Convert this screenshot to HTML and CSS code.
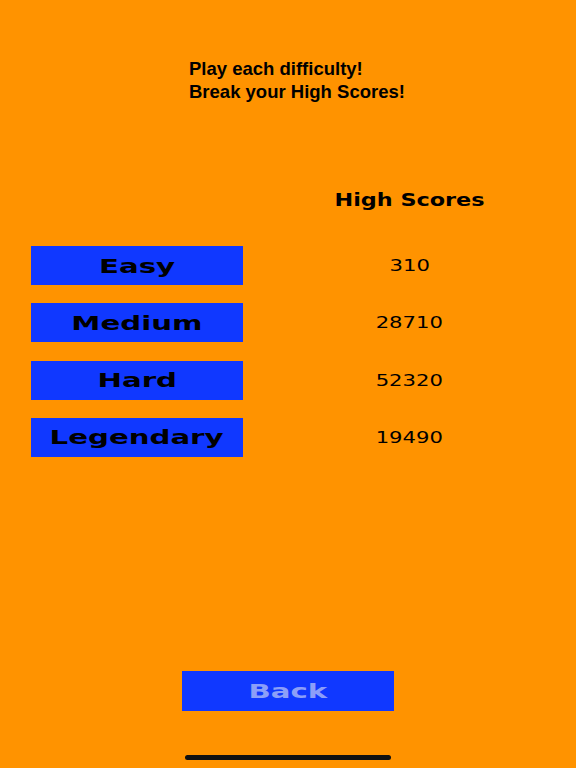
FILE: index.html
```html
<!DOCTYPE html>
<html>
<head>
<meta charset="utf-8">
<link rel="stylesheet" href="styles.css">
</head>
<body>
<div class="screen">
  <div class="intro">
    <div>Play each difficulty!</div>
    <div>Break your High Scores!</div>
  </div>
  <div class="head-row">
    <div class="heading"><span class="wide wide-head">High Scores</span></div>
  </div>
  <div class="board">
    <div class="btn"><span class="wide wide-btn">Easy</span></div>
    <div class="score"><span class="wide wide-num">310</span></div>
    <div class="btn"><span class="wide wide-btn">Medium</span></div>
    <div class="score"><span class="wide wide-num">28710</span></div>
    <div class="btn"><span class="wide wide-btn">Hard</span></div>
    <div class="score"><span class="wide wide-num">52320</span></div>
    <div class="btn"><span class="wide wide-btn">Legendary</span></div>
    <div class="score"><span class="wide wide-num">19490</span></div>
  </div>
  <div class="back"><span class="wide wide-btn">Back</span></div>
  <div class="home-indicator"></div>
</div>
</body>
</html>
```
FILE: styles.css
```css
html, body {
  margin: 0;
  padding: 0;
  background: #ff9300;
}
.screen {
  position: relative;
  width: 576px;
  height: 768px;
  display: flex;
  flex-direction: column;
  font-family: "Liberation Sans", Arial, sans-serif;
  color: #000;
}
.intro {
  padding: 58px 0 0 189px;
  font-size: 18.5px;
  font-weight: bold;
  line-height: 22.5px;
}
.head-row {
  margin-top: 77px;
  padding-left: 243px;
  height: 39px;
  display: flex;
}
.heading {
  flex: 1;
  display: flex;
  align-items: center;
  justify-content: center;
  font-family: "DejaVu Sans", sans-serif;
  font-size: 18px;
  font-weight: bold;
}
.board {
  margin-top: 27px;
  padding-left: 31px;
  display: grid;
  grid-template-columns: 212px 1fr;
  grid-auto-rows: 39px;
  row-gap: 18.33px;
}
.btn {
  background: #1038ff;
  display: flex;
  align-items: center;
  justify-content: center;
  font-family: "DejaVu Sans", sans-serif;
  font-size: 20px;
  font-weight: bold;
}
.score {
  display: flex;
  align-items: center;
  justify-content: center;
  font-family: "DejaVu Sans", sans-serif;
  font-size: 16.5px;
}
.wide {
  display: inline-block;
}
.wide-btn { transform: scaleX(1.46); }
.wide-head { transform: scaleX(1.24); }
.wide-num { transform: scaleX(1.28); }
.back {
  margin: auto auto 57px auto;
  width: 212px;
  height: 40px;
  background: #1038ff;
  color: #8c9ff8;
  display: flex;
  align-items: center;
  justify-content: center;
  font-family: "DejaVu Sans", sans-serif;
  font-size: 20px;
  font-weight: bold;
}
.home-indicator {
  position: absolute;
  left: 185px;
  bottom: 8px;
  width: 206px;
  height: 5px;
  border-radius: 3px;
  background: #111;
}
```
